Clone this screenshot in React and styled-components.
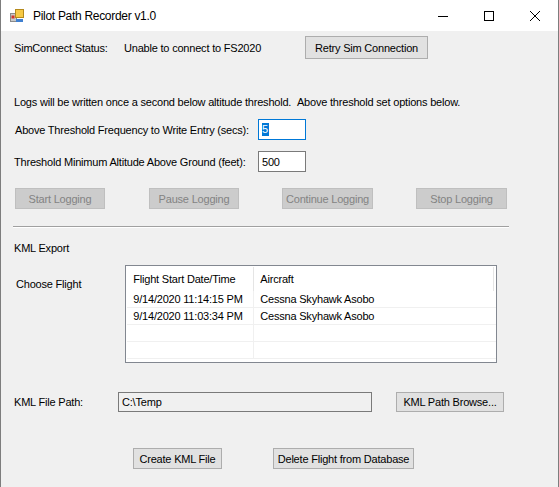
import React from 'react'
import styled, { createGlobalStyle } from 'styled-components'

const GlobalStyle = createGlobalStyle`
    html, body {
        margin: 0;
        padding: 0;
        background: #3a3a3a;
    }
    * {
        box-sizing: border-box;
    }
`

const Window = styled.div`
    width: 559px;
    height: 487px;
    display: flex;
    flex-direction: column;
    background: #f0f0f0;
    border-left: 1px solid #7d7d7d;
    border-right: 1px solid #7d7d7d;
    font-family: 'Liberation Sans', Arial, sans-serif;
    font-size: 11px;
    letter-spacing: -0.2px;
    color: #000;
    overflow: hidden;
`

const TitleBar = styled.div`
    height: 31px;
    flex: none;
    display: flex;
    align-items: center;
    background: #fff;
    padding-left: 9px;
`

const Title = styled.div`
    flex: 1;
    margin-left: 9px;
    font-size: 12px;
    letter-spacing: -0.3px;
    padding-top: 1px;
`

const Caption = styled.div`
    width: 46px;
    height: 31px;
    display: flex;
    align-items: center;
    justify-content: center;
`

const Body = styled.div`
    flex: 1;
    display: flex;
    flex-direction: column;
    padding: 0 0 0 12px;
`

const Row = styled.div`
    display: flex;
    align-items: center;
    height: ${(p) => p.$h || 21}px;
    margin-top: ${(p) => p.$top || 0}px;
`

const Label = styled.div`
    width: ${(p) => (p.$w ? `${p.$w}px` : 'auto')};
    flex: none;
    padding-left: ${(p) => p.$pad || 1}px;
    margin-top: ${(p) => p.$top || 0}px;
    white-space: nowrap;
`

const Button = styled.div`
    width: ${(p) => p.$w}px;
    height: ${(p) => p.$h || 21}px;
    margin-left: ${(p) => p.$left || 0}px;
    flex: none;
    display: flex;
    align-items: center;
    justify-content: center;
    background: ${(p) => (p.$disabled ? '#cccccc' : '#e1e1e1')};
    border: 1px solid ${(p) => (p.$disabled ? '#bfbfbf' : '#adadad')};
    color: ${(p) => (p.$disabled ? '#838383' : '#000')};
    white-space: nowrap;
`

const TextBox = styled.div`
    width: ${(p) => p.$w}px;
    height: ${(p) => p.$h || 21}px;
    flex: none;
    display: flex;
    align-items: center;
    padding-left: 3px;
    background: ${(p) => (p.$readOnly ? '#f0f0f0' : '#fff')};
    border: 1px solid ${(p) => (p.$focused ? '#0078d7' : '#7a7a7a')};
`

const Selected = styled.span`
    background: #0078d7;
    color: #fff;
    line-height: 13px;
    padding: 0 1px 0 0;
`

const Separator = styled.div`
    width: 496px;
    height: 2px;
    border-top: 1px solid #a0a0a0;
    border-bottom: 1px solid #fff;
    margin-top: 17px;
`

const ListRow = styled.div`
    display: flex;
    align-items: flex-start;
    margin-top: 9px;
`

const ListView = styled.div`
    width: 372px;
    height: 98px;
    margin-left: ${(p) => p.$left}px;
    background: #fff;
    border: 1px solid #828790;
    padding: 1px 0 0 1px;
`

const ListHeader = styled.div`
    display: grid;
    grid-template-columns: 127px 240px;
    height: 24px;
`

const HeaderCell = styled.div`
    display: flex;
    align-items: center;
    padding-left: 6px;
    border-right: 1px solid #e5e5e5;
`

const ListLine = styled.div`
    display: grid;
    grid-template-columns: 127px 240px;
    height: 17px;
    border-bottom: 1px solid #f0f0f0;
`

const Cell = styled.div`
    display: flex;
    align-items: center;
    padding-left: 6px;
    border-right: 1px solid ${(p) => (p.$last ? 'transparent' : '#f0f0f0')};
    white-space: nowrap;
`

const AppIcon = () => (
    <svg width="14" height="14" viewBox="0 0 14 14">
        <rect x="0.5" y="4.5" width="6" height="8" fill="#c8c8c8" stroke="#8a8a8a" />
        <rect x="1.5" y="6.5" width="3" height="3" fill="#d0342c" />
        <rect x="5.5" y="0.5" width="8" height="8" fill="#f6c945" stroke="#b58a1c" />
        <rect x="6" y="10" width="7" height="3" fill="#3f7fd0" />
    </svg>
)

const flights = [
    ['9/14/2020 11:14:15 PM', 'Cessna Skyhawk Asobo'],
    ['9/14/2020 11:03:34 PM', 'Cessna Skyhawk Asobo'],
    ['', ''],
    ['', ''],
]

const App = () => {
    return (
        <>
            <GlobalStyle />
            <Window>
                <TitleBar>
                    <AppIcon />
                    <Title>Pilot Path Recorder v1.0</Title>
                    <Caption>
                        <svg width="10" height="10" viewBox="0 0 10 10">
                            <line x1="0" y1="5.5" x2="10" y2="5.5" stroke="#000" />
                        </svg>
                    </Caption>
                    <Caption>
                        <svg width="10" height="10" viewBox="0 0 10 10">
                            <rect x="0.5" y="0.5" width="9" height="9" fill="none" stroke="#000" />
                        </svg>
                    </Caption>
                    <Caption>
                        <svg width="10" height="10" viewBox="0 0 10 10">
                            <path d="M0 0L10 10M10 0L0 10" stroke="#000" />
                        </svg>
                    </Caption>
                </TitleBar>
                <Body>
                    <Row $h={23} $top={5}>
                        <Label $w={110}>SimConnect Status:</Label>
                        <Label $w={182}>Unable to connect to FS2020</Label>
                        <Button $w={123} $h={23}>Retry Sim Connection</Button>
                    </Row>
                    <Row $h={17} $top={34}>
                        <Label>
                            Logs will be written once a second below altitude threshold.&nbsp;&nbsp;Above
                            threshold set options below.
                        </Label>
                    </Row>
                    <Row $top={9}>
                        <Label $w={245} $pad={2}>
                            Above Threshold Frequency to Write Entry (secs):
                        </Label>
                        <TextBox $w={48} $focused>
                            <Selected>5</Selected>
                        </TextBox>
                    </Row>
                    <Row $top={11}>
                        <Label $w={245}>Threshold Minimum Altitude Above Ground (feet):</Label>
                        <TextBox $w={48}>500</TextBox>
                    </Row>
                    <Row $top={16}>
                        <Button $w={90} $left={2} $disabled>Start Logging</Button>
                        <Button $w={90} $left={44} $disabled>Pause Logging</Button>
                        <Button $w={91} $left={43} $disabled>Continue Logging</Button>
                        <Button $w={91} $left={43} $disabled>Stop Logging</Button>
                    </Row>
                    <Separator />
                    <Row $h={17} $top={11}>
                        <Label>KML Export</Label>
                    </Row>
                    <ListRow>
                        <Label $pad={3} $top={13}>
                            Choose Flight
                        </Label>
                        <ListView $left={44}>
                            <ListHeader>
                                <HeaderCell>Flight Start Date/Time</HeaderCell>
                                <HeaderCell>Aircraft</HeaderCell>
                            </ListHeader>
                            {flights.map(([date, aircraft], i) => (
                                <ListLine key={i}>
                                    <Cell>{date}</Cell>
                                    <Cell $last>{aircraft}</Cell>
                                </ListLine>
                            ))}
                        </ListView>
                    </ListRow>
                    <Row $h={20} $top={29}>
                        <Label $w={105}>KML File Path:</Label>
                        <TextBox $w={254} $h={20} $readOnly>
                            C:\Temp
                        </TextBox>
                        <Button $w={108} $h={20} $left={24}>KML Path Browse...</Button>
                    </Row>
                    <Row $top={36}>
                        <Button $w={89} $left={120}>Create KML File</Button>
                        <Button $w={141} $left={51}>Delete Flight from Database</Button>
                    </Row>
                </Body>
            </Window>
        </>
    )
}

export default App
